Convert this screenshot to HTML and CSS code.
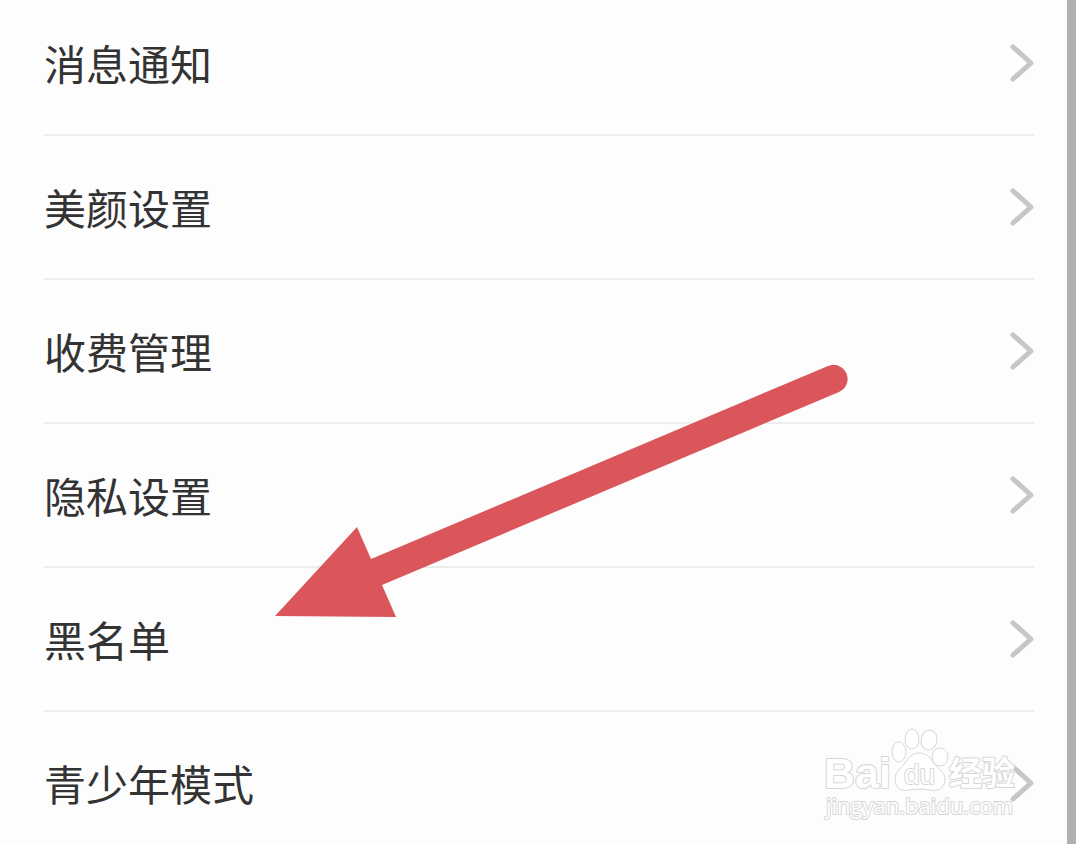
FILE: index.html
```html
<!DOCTYPE html>
<html lang="zh-CN">
<head>
    <meta charset="UTF-8">
    <meta name="viewport" content="width=device-width, initial-scale=1.0">
    <title>设置</title>
    <link rel="stylesheet" href="styles.css">
</head>
<body>
    <main class="settings">
        <ul class="menu">
            <li><a class="item" href="#">消息通知<svg class="chevron" viewBox="0 0 24 38"><path d="M3 3 21 19 3 35"/></svg></a></li>
            <li><a class="item" href="#">美颜设置<svg class="chevron" viewBox="0 0 24 38"><path d="M3 3 21 19 3 35"/></svg></a></li>
            <li><a class="item" href="#">收费管理<svg class="chevron" viewBox="0 0 24 38"><path d="M3 3 21 19 3 35"/></svg></a></li>
            <li><a class="item" href="#">隐私设置<svg class="chevron" viewBox="0 0 24 38"><path d="M3 3 21 19 3 35"/></svg></a></li>
            <li><a class="item" href="#">黑名单<svg class="chevron" viewBox="0 0 24 38"><path d="M3 3 21 19 3 35"/></svg></a></li>
            <li><a class="item" href="#">青少年模式<svg class="chevron" viewBox="0 0 24 38"><path d="M3 3 21 19 3 35"/></svg></a></li>
        </ul>
    </main>

    <!-- arrow pointing at the blacklist row -->
    <svg class="arrow" viewBox="0 0 580 260" aria-hidden="true">
        <path d="M5 251 87 162 101 194 558 1A14 14 0 0 1 569 27L112 220 126 252Z"/>
    </svg>

    <svg class="watermark" viewBox="0 0 220 110" aria-hidden="true">
        <text class="wm-brand" x="14" y="73">Bai</text>
        <ellipse cx="89" cy="37" rx="7" ry="10"/>
        <ellipse cx="102" cy="24" rx="7" ry="10"/>
        <ellipse cx="119" cy="25" rx="8" ry="10" transform="rotate(10 119 25)"/>
        <ellipse cx="130" cy="42" rx="8" ry="9"/>
        <path d="M109 38C101 38 98 44 95 48C92 53 85 56 85 64C85 73 92 77 99 75C106 74 113 74 119 75C128 77 135 73 135 64C135 57 127 53 123 47C120 42 116 38 109 38Z"/>
        <text class="wm-du" x="94" y="69">du</text>
        <text class="wm-cn" x="139" y="70">经验</text>
        <text class="wm-url" x="16" y="99">jingyan.baidu.com</text>
    </svg>
</body>
</html>
```

FILE: styles.css
```css
* {
    box-sizing: border-box;
}
body {
    position: relative;
    height: 100vh;
    margin: 0;
    overflow: hidden;
    background: #fdfdfd;
    font-family: "Noto Sans CJK SC", sans-serif;
}
.settings {
    min-height: 100vh;
    padding: 0 33px 0 44px;
    border-right: 9px solid #b0b0b0;
}
.menu {
    margin: 0;
    padding: 0;
    list-style: none;
}
.item {
    display: flex;
    justify-content: space-between;
    align-items: center;
    height: 144px;
    border-bottom: 2px solid #ededed;
    color: #333;
    font-size: 42px;
    line-height: 60px;
    text-decoration: none;
}
/* the list is scrolled a little under the top edge */
.menu li:first-child .item {
    height: 136px;
    padding-bottom: 8px;
}
.chevron {
    width: 24px;
    height: 38px;
    fill: none;
    stroke: #c6c6c6;
    stroke-width: 5;
    stroke-linecap: round;
    stroke-linejoin: round;
}
.arrow {
    position: absolute;
    top: 365px;
    left: 270px;
    width: 580px;
    height: 260px;
    fill: #da565b;
}
.watermark {
    position: absolute;
    top: 715px;
    right: 46px;
    width: 220px;
    height: 110px;
    fill: #fff;
    stroke: #d6d6d6;
    stroke-width: 1;
}
.watermark text {
    stroke-width: 2;
    stroke-linejoin: round;
    paint-order: stroke;
}
.wm-brand,
.wm-du {
    font-family: "Liberation Sans", sans-serif;
}
.wm-brand {
    font-size: 43px;
    font-weight: bold;
}
.wm-du {
    font-size: 28px;
}
.wm-cn {
    font-size: 33px;
    font-weight: bold;
}
.wm-url {
    font-family: "Open Sans", sans-serif;
    font-size: 22px;
}
```
